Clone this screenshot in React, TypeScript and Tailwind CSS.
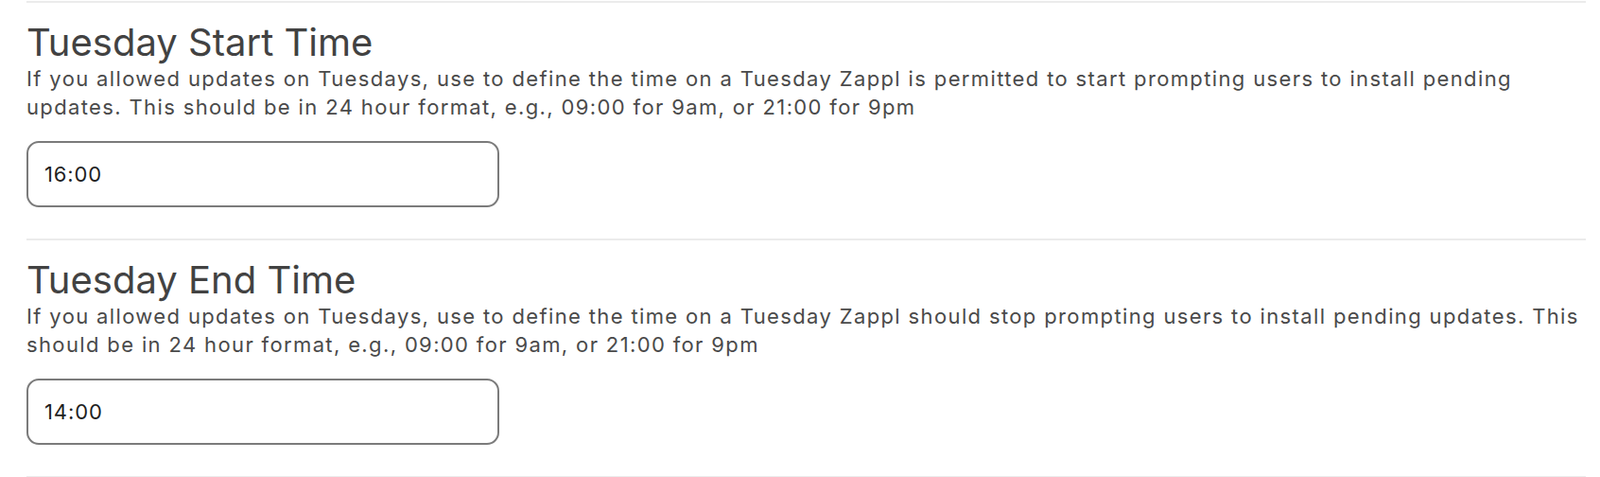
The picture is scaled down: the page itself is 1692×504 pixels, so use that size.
import { useState } from 'react';

type Field = {
  title: string;
  description: string;
  value: string;
};

const fields: Field[] = [
  {
    title: 'Tuesday Start Time',
    description:
      'If you allowed updates on Tuesdays, use to define the time on a Tuesday Zappl is permitted to start prompting users to install pending updates. This should be in 24 hour format, e.g., 09:00 for 9am, or 21:00 for 9pm',
    value: '16:00',
  },
  {
    title: 'Tuesday End Time',
    description:
      'If you allowed updates on Tuesdays, use to define the time on a Tuesday Zappl should stop prompting users to install pending updates. This should be in 24 hour format, e.g., 09:00 for 9am, or 21:00 for 9pm',
    value: '14:00',
  },
];

function TimeField({ field }: { field: Field }) {
  const [value, setValue] = useState(field.value);

  return (
    <section className="border-t-2 border-[#ebebeb] pt-[18px] pb-[33px]">
      <h2 className="text-[40px] leading-[48px] font-normal text-[#424242]">{field.title}</h2>
      <p className="text-[22px] leading-[29.5px] tracking-[0.062em] text-[#4a4a4a]">{field.description}</p>
      <input
        type="text"
        value={value}
        onChange={(e) => setValue(e.target.value)}
        className="mt-[21px] block h-[70px] w-[500px] rounded-[13px] border-2 border-[#7b7b7b] bg-white px-[17px] text-[22px] tracking-[0.04em] text-[#1f1f1f] outline-none"
      />
    </section>
  );
}

export default function App() {
  return (
    <div className="min-h-screen bg-white pt-[1px] pl-[28px] pr-[15px] font-['Inter',sans-serif]">
      {fields.map((field) => (
        <TimeField key={field.title} field={field} />
      ))}
      <div className="border-t-2 border-[#ebebeb]" />
    </div>
  );
}
